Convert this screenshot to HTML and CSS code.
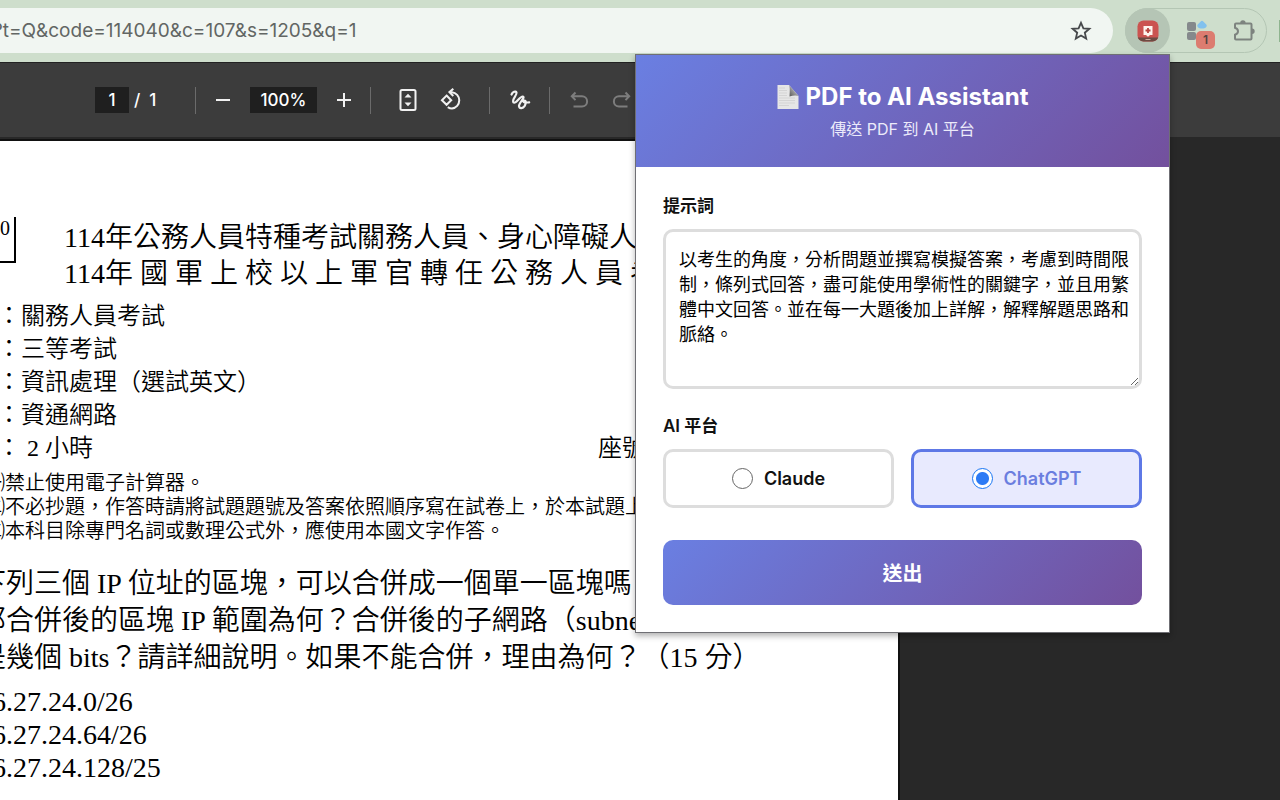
FILE: index.html
```html
<!DOCTYPE html>
<html lang="zh-Hant">
<head>
<meta charset="utf-8">
<title>PDF to AI Assistant</title>
<link rel="stylesheet" href="styles.css">
</head>
<body>
<header class="browser-bar">
  <div class="address">
    <span class="address-text">?t=Q&amp;code=114040&amp;c=107&amp;s=1205&amp;q=1</span>
    <button class="icon-button" aria-label="Bookmark">
      <svg width="22" height="22" viewBox="0 0 22 22" fill="none" stroke="#47494c" stroke-width="1.8" stroke-linejoin="miter"><path d="M11 2.8l2.4 5.5 6 .5-4.6 3.9 1.4 5.9-5.2-3.1-5.2 3.1 1.4-5.9L2.6 8.800l6-.5z"/></svg>
    </button>
  </div>
  <div class="extensions">
    <button class="extension active" aria-label="PDF to AI Assistant">
      <svg width="22" height="22" viewBox="0 0 22 22"><defs><clipPath id="tile"><rect width="21" height="21" x=".5" y=".5" rx="6"/></clipPath></defs><g clip-path="url(#tile)"><rect width="22" height="22" fill="#cb5350"/><rect y="17.500" width="22" height="5" fill="#6d4a42"/></g><path d="M6.500 6h9v9h-2.500L11 16.800 9 15H6.500z" fill="#fff4ee"/><path d="M11 8v5M8.500 10.500h5" stroke="#b8443f" stroke-width="1.800"/><path d="M8.500 19.500h5" stroke="#c9a59c" stroke-width="1"/></svg>
    </button>
    <button class="extension" aria-label="Extension, 1 notification">
      <svg width="22" height="22" viewBox="0 0 22 22"><g fill="#85898c"><rect x="1" y="2" width="9" height="9" rx="2"/><rect x="1" y="12" width="9" height="8" rx="2"/></g><path d="M16 .800q.7 0 1.300.700l3 3q1 1.300 0 2.600-.9 1.400-3 1.400h-2.600q-2.100 0-3-1.400-1-1.300 0-2.600l3-3q.6-.7 1.300-.7z" fill="#82c1ee"/></svg>
      <span class="badge">1</span>
    </button>
    <button class="extension" aria-label="Extensions">
      <svg width="24" height="24" viewBox="0 0 24 24"><path d="M5 4.500h14.500a1 1 0 0 1 1 1v14a1 1 0 0 1-1 1H5a1 1 0 0 1-1-1v-3.700q3-1 3-3.500T4 8.700V5.500a1 1 0 0 1 1-1z" fill="none" stroke="#7d837f" stroke-width="2"/><path d="M9.200 4a2.700 2.700 0 0 1 5.400 0zM21 9.500a2.700 2.700 0 0 1 0 5.400z" fill="#7d837f"/></svg>
    </button>
  </div>
  <span class="next-item"></span>
</header>

<nav class="viewer-bar" aria-label="PDF">
  <div class="group pages">
    <input class="field page-field" value="1" aria-label="Page">
    <span>/&nbsp; 1</span>
  </div>
  <div class="group zoom">
    <button class="icon-button" aria-label="Zoom out"><svg width="24" height="24" viewBox="0 0 24 24"><path d="M5 12h14" stroke="#f1f1f1" stroke-width="2"/></svg></button>
    <input class="field zoom-field" value="100%" aria-label="Zoom level">
    <button class="icon-button" aria-label="Zoom in"><svg width="24" height="24" viewBox="0 0 24 24"><path d="M5 12h14M12 5v14" stroke="#f1f1f1" stroke-width="2"/></svg></button>
  </div>
  <div class="group view">
    <button class="icon-button" aria-label="Fit to page"><svg width="24" height="24" viewBox="0 0 24 24"><rect x="4.500" y="2" width="15" height="20" rx="1.500" fill="none" stroke="#f1f1f1" stroke-width="2"/><path d="M8.500 9.500L12 5.800l3.500 3.700zM8.500 14.500l3.500 3.700 3.500-3.700z" fill="#f1f1f1"/></svg></button>
    <button class="icon-button" aria-label="Rotate"><svg width="26" height="26" viewBox="0 0 26 26" fill="none" stroke="#f1f1f1" stroke-width="2.200"><path d="M8.200 8.200l5 5-5 5-5-5zM12 4.500h2a8.900 8.900 0 0 1 0 17.700q-2.200 0-4.500-1.500"/><path d="M15.500.800L11.300 4.500l4.200 4.200"/></svg></button>
  </div>
  <div class="group draw">
    <button class="icon-button" aria-label="Draw"><svg width="24" height="24" viewBox="0 0 24 24" fill="none" stroke="#f1f1f1" stroke-width="2.200" stroke-linecap="round" stroke-linejoin="round"><path d="M4.500 6.500C5.500 4.200 8.800 2.300 9.500 4.600 10.200 7.200 4.300 12 6.500 14.500c2.500 2 6.300-6.500 9.300-6 3 .8-4.300 6.500-3.800 9.700.5 3 4 2.300 5.700-.3 1.500-2.500 1.400-5.400-.2-5.400-2.200.2-1.700 2.700 4.700 1.800"/></svg></button>
  </div>
  <div class="group history">
    <button class="icon-button" aria-label="Undo" disabled><svg width="24" height="24" viewBox="0 0 24 24" fill="none" stroke="#7d7d7d" stroke-width="2"><path d="M8.500 4.500L4.800 8.300l3.700 3.800M5 8.300h10a5 5 0 0 1 0 10.200H6.500"/></svg></button>
    <button class="icon-button" aria-label="Redo" disabled><svg width="24" height="24" viewBox="0 0 24 24" fill="none" stroke="#7d7d7d" stroke-width="2"><path d="M15.500 4.500l3.700 3.800-3.700 3.800M19 8.300H9a5 5 0 0 0 0 10.200h8.500"/></svg></button>
  </div>
</nav>

<main class="viewer">
  <article class="sheet">
    <div class="sheet-head">
      <div class="code-box">0</div>
      <h2 class="exam-title">114年公務人員特種考試關務人員、身心障礙人<br>114年 國 軍 上 校 以 上 軍 官 轉 任 公 務 人 員 考</h2>
    </div>
    <div class="meta">
      <p>：關務人員考試</p>
      <p>：三等考試</p>
      <p>：資訊處理（選試英文）</p>
      <p>：資通網路</p>
      <p class="meta-row"><span>： 2 小時</span><span>座號</span></p>
    </div>
    <div class="notes">
      <p>㈠禁止使用電子計算器。</p>
      <p>㈡不必抄題，作答時請將試題題號及答案依照順序寫在試卷上，於本試題上</p>
      <p>㈢本科目除專門名詞或數理公式外，應使用本國文字作答。</p>
    </div>
    <div class="question">
      <p>下列三個 IP 位址的區塊，可以合併成一個單一區塊嗎？</p>
      <p>那合併後的區塊 IP 範圍為何？合併後的子網路（subnet</p>
      <p>是幾個 bits？請詳細說明。如果不能合併，理由為何？（15 分）</p>
    </div>
    <div class="addresses">
      <p>6.27.24.0/26</p>
      <p>6.27.24.64/26</p>
      <p>6.27.24.128/25</p>
    </div>
  </article>
</main>

<section class="popup">
  <header class="popup-head">
    <h1><svg width="22" height="24" viewBox="0 0 22 24"><defs><linearGradient id="fold" x1="0" y1="1" x2="1" y2="0"><stop offset="0" stop-color="#555"/><stop offset="1" stop-color="#e8e8e8"/></linearGradient></defs><path d="M.5 0H12l9.500 11v13H.5z" fill="#e6e6e6"/><path d="M2 3h6M2 5.500h8M2 8h8M2 10.500h8M2 13h16M2 15.500h16M2 18h16M2 20.500h10" stroke="#d4d4d4" stroke-width="1"/><path d="M12 0q1.200 2 .5 11.500 5-1.500 9-.5z" fill="url(#fold)"/></svg>PDF to AI Assistant</h1>
    <p>傳送 PDF 到 AI 平台</p>
  </header>
  <form class="popup-body">
    <label class="label" for="prompt">提示詞</label>
    <textarea id="prompt" class="prompt" spellcheck="false">以考生的角度，分析問題並撰寫模擬答案，考慮到時間限制，條列式回答，盡可能使用學術性的關鍵字，並且用繁體中文回答。並在每一大題後加上詳解，解釋解題思路和脈絡。</textarea>
    <fieldset class="platforms">
      <legend class="label">AI 平台</legend>
      <div class="options">
        <label class="option"><input type="radio" name="platform" value="claude">Claude</label>
        <label class="option"><input type="radio" name="platform" value="chatgpt" checked>ChatGPT</label>
      </div>
    </fieldset>
    <button type="button" class="send">送出</button>
  </form>
</section>
</body>
</html>
```

FILE: styles.css
```css
* { box-sizing: border-box; }

body {
  margin: 0;
  height: 100vh;
  display: flex;
  flex-direction: column;
  position: relative;
  overflow: hidden;
  background: #282828;
  font-family: Inter, "Noto Sans CJK TC", sans-serif;
}

p, h1, h2 { margin: 0; }
button { border: 0; padding: 0; background: none; font: inherit; }
svg { display: block; }

.icon-button { display: flex; align-items: center; justify-content: center; width: 24px; height: 24px; }

/* Browser bar */
.browser-bar {
  display: flex;
  align-items: center;
  height: 62px;
  flex: none;
  padding: 8px 0 9px;
  background: #cedecc;
}
.address {
  flex: 1;
  display: flex;
  align-items: center;
  justify-content: space-between;
  height: 45px;
  padding-right: 20px;
  border-radius: 0 23px 23px 0;
  background: #f1f6f2;
}
.address-text { margin-left: -7px; font-size: 19px; color: #626664; }
.extensions {
  display: flex;
  width: 142px;
  height: 45px;
  margin: 0 12px;
  border: 1px solid #b4c6b4;
  border-radius: 23px;
}
.extension {
  position: relative;
  display: flex;
  align-items: center;
  justify-content: center;
  width: 48px;
  height: 43px;
}
.extension.active { width: 45px; height: 45px; margin: -1px 4px 0 -1px; flex: none; border-radius: 50%; background: #b5c5b5; }
.badge {
  position: absolute;
  left: 22px;
  top: 22px;
  width: 19px;
  height: 18px;
  border-radius: 5px;
  background: #dc7c70;
  color: #534440;
  font-size: 12px;
  font-weight: 600;
  line-height: 18px;
}
.next-item { width: 1px; height: 22px; background: #8fb48f; }

/* PDF toolbar */
.viewer-bar {
  display: flex;
  align-items: center;
  flex: none;
  height: 75px;
  padding-left: 95px;
  border-top: 1px solid #222;
  background: #3c3c3c;
  color: #fff;
  font-size: 17px;
  font-weight: 500;
}
.group { display: flex; align-items: center; height: 27px; gap: 19px; }
.group + .group { border-left: 1px solid #6b6b6b; }
.pages { gap: 5px; width: 100px; }
.zoom { gap: 15px; width: 175px; padding-left: 15px; }
.view { width: 119px; padding-left: 25px; }
.draw { width: 60px; padding-left: 17px; }
.history { padding-left: 17px; }
.field { height: 26px; padding: 0; border: 0; background: #1f1f1f; color: #fff; font: inherit; text-align: center; }
.page-field { width: 34px; }
.zoom-field { width: 67px; }

/* Document */
.viewer { flex: 1; min-height: 0; overflow: hidden; padding-top: 4px; }
.sheet {
  width: 898px;
  height: 100%;
  padding-top: 76px;
  background: #fff;
  box-shadow: 0 0 0 2px #111;
  color: #000;
  font-family: "Liberation Serif", "Noto Sans CJK TC", serif;
  font-weight: 350;
  white-space: nowrap;
}
.sheet-head { display: flex; gap: 48px; }
.code-box { width: 16px; height: 46px; border: solid #000; border-width: 0 2px 2px 0; font-size: 20px; line-height: 22px; }
.exam-title { padding-top: 3px; font-size: 28px; font-weight: 350; line-height: 36px; }
.meta { margin: 8px 0 0 -3px; font-size: 24px; line-height: 33px; }
.meta-row { display: flex; justify-content: space-between; width: 649px; }
.notes { margin: 6px 0 0 -15px; font-size: 20px; line-height: 24px; }
.question { margin: 22px 0 0 -22px; font-size: 28px; line-height: 37px; }
.addresses { margin: 9px 0 0 -8px; font-size: 28px; line-height: 33px; }

/* Extension popup */
.popup {
  position: absolute;
  top: 54px;
  right: 110px;
  width: 535px;
  border: 1px solid #6f6f74;
  background: #fff;
  box-shadow: 0 3px 6px rgba(0, 0, 0, .3);
}
.popup-head {
  height: 112px;
  padding: 26px 0 0;
  background: linear-gradient(135deg, #6a7fe2, #73509d);
  color: #fff;
  text-align: center;
}
.popup-head h1 { display: flex; align-items: center; justify-content: center; gap: 7px; font-size: 24px; font-weight: 700; line-height: 32px; }
.popup-head p { margin-top: 4px; font-size: 16px; line-height: 24px; color: #ecebfa; }
.popup-body { padding: 27px; }
.label { display: block; padding: 0; font-size: 17px; font-weight: 600; line-height: 24px; color: #111; }
.prompt {
  display: block;
  width: 100%;
  height: 160px;
  margin: 11px 0 25px;
  padding: 15px 9px 14px 13px;
  border: 3px solid #ddd;
  border-radius: 10px;
  background: #fff;
  color: #000;
  font: 18px/25px Inter, "Noto Sans CJK TC", sans-serif;
  resize: vertical;
}
.platforms { margin: 0; padding: 0; border: 0; }
.options { display: flex; gap: 17px; margin-top: 11px; }
.option {
  flex: 1;
  display: flex;
  align-items: center;
  justify-content: center;
  gap: 11px;
  height: 59px;
  border: 3px solid #ddd;
  border-radius: 10px;
  color: #111;
  font-size: 18px;
  font-weight: 600;
}
.option:has(input:checked) { border-color: #5e78e6; background: #e8eafe; color: #6b7edf; }
.option input {
  appearance: none;
  width: 21px;
  height: 21px;
  margin: 0;
  border: 1px solid #666;
  border-radius: 50%;
  background: #fff;
}
.option input:checked { border-color: #1976f3; background: radial-gradient(circle, #2d7bf5 6px, #fff 7px); }
.send {
  display: block;
  width: 100%;
  height: 65px;
  margin-top: 32px;
  border-radius: 10px;
  background: linear-gradient(135deg, #6a7fe2, #73509d);
  color: #fff;
  font-size: 20px;
  font-weight: 700;
}
```
